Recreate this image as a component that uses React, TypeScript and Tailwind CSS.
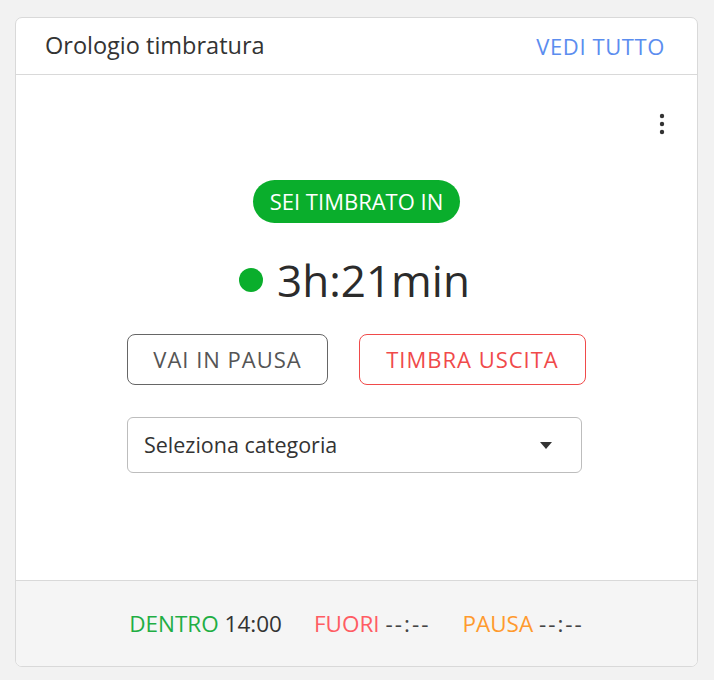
import React from "react";

const font = { fontFamily: "'Open Sans', 'Noto Sans', sans-serif" };

export default function App() {
  return (
    <div className="min-h-[680px] bg-[#f2f2f2] px-[15px] pt-[17px]" style={font}>
      <div className="w-[683px] overflow-hidden rounded-[7px] border border-[#d9d9d9] bg-white">
        <header className="flex h-[57px] items-center justify-between border-b border-[#d9d9d9] pl-[29px] pr-[32px]">
          <h2 className="text-[23.5px] text-[#333]">Orologio timbratura</h2>
          <a className="text-[22px] tracking-[0.6px] text-[#5b8def]">VEDI TUTTO</a>
        </header>

        <section className="h-[505px]">
          <div className="flex justify-end pr-[23px] pt-[37px]">
            <KebabIcon />
          </div>

          <div className="mt-[44px] flex flex-col items-center">
            <span className="flex h-[43px] w-[207px] items-center justify-center rounded-full bg-[#0aae2c] text-[22px] text-white">
              SEI TIMBRATO IN
            </span>

            <div className="mt-[33px] flex h-[48px] items-center gap-[14px] pr-[4px]">
              <span className="h-[24px] w-[24px] rounded-full bg-[#0aae2c]" />
              <span className="text-[44px] leading-none text-[#2b2b2b]">3h:21min</span>
            </div>

            <div className="mt-[30px] flex w-[459px] flex-col">
              <div className="flex gap-[31px]">
                <button className="h-[51px] w-[201px] rounded-[8px] border-[1.5px] border-[#666] text-[22px] tracking-[1px] text-[#555]">
                  VAI IN PAUSA
                </button>
                <button className="h-[51px] w-[227px] rounded-[8px] border-[1.5px] border-[#f04a4a] text-[22px] tracking-[1px] text-[#f04a4a]">
                  TIMBRA USCITA
                </button>
              </div>

              <div className="mt-[32px] flex h-[56px] w-[455px] items-center justify-between rounded-[6px] border border-[#bdbdbd] pl-[16px] pr-[29px]">
                <span className="text-[21.5px] text-[#333]">Seleziona categoria</span>
                <svg width="12" height="7" viewBox="0 0 12 7">
                  <path d="M0 0h12L6 7z" fill="#333" />
                </svg>
              </div>
            </div>
          </div>
        </section>

        <footer className="flex h-[86px] items-center justify-center gap-[32px] border-t border-[#d9d9d9] bg-[#f5f5f5] text-[22.5px]">
          <span>
            <span className="text-[#1fae44]">DENTRO</span> <span className="text-[#333]">14:00</span>
          </span>
          <span>
            <span className="text-[#ff5c63]">FUORI</span> <span className="tracking-[2px] text-[#444]">--:--</span>
          </span>
          <span>
            <span className="text-[#ff9a2e]">PAUSA</span> <span className="tracking-[2px] text-[#444]">--:--</span>
          </span>
        </footer>
      </div>
    </div>
  );
}

function KebabIcon() {
  return (
    <svg width="24" height="24" viewBox="0 0 24 24">
      <circle cx="12" cy="4" r="2.2" fill="#333" />
      <circle cx="12" cy="12" r="2.2" fill="#333" />
      <circle cx="12" cy="20" r="2.2" fill="#333" />
    </svg>
  );
}
